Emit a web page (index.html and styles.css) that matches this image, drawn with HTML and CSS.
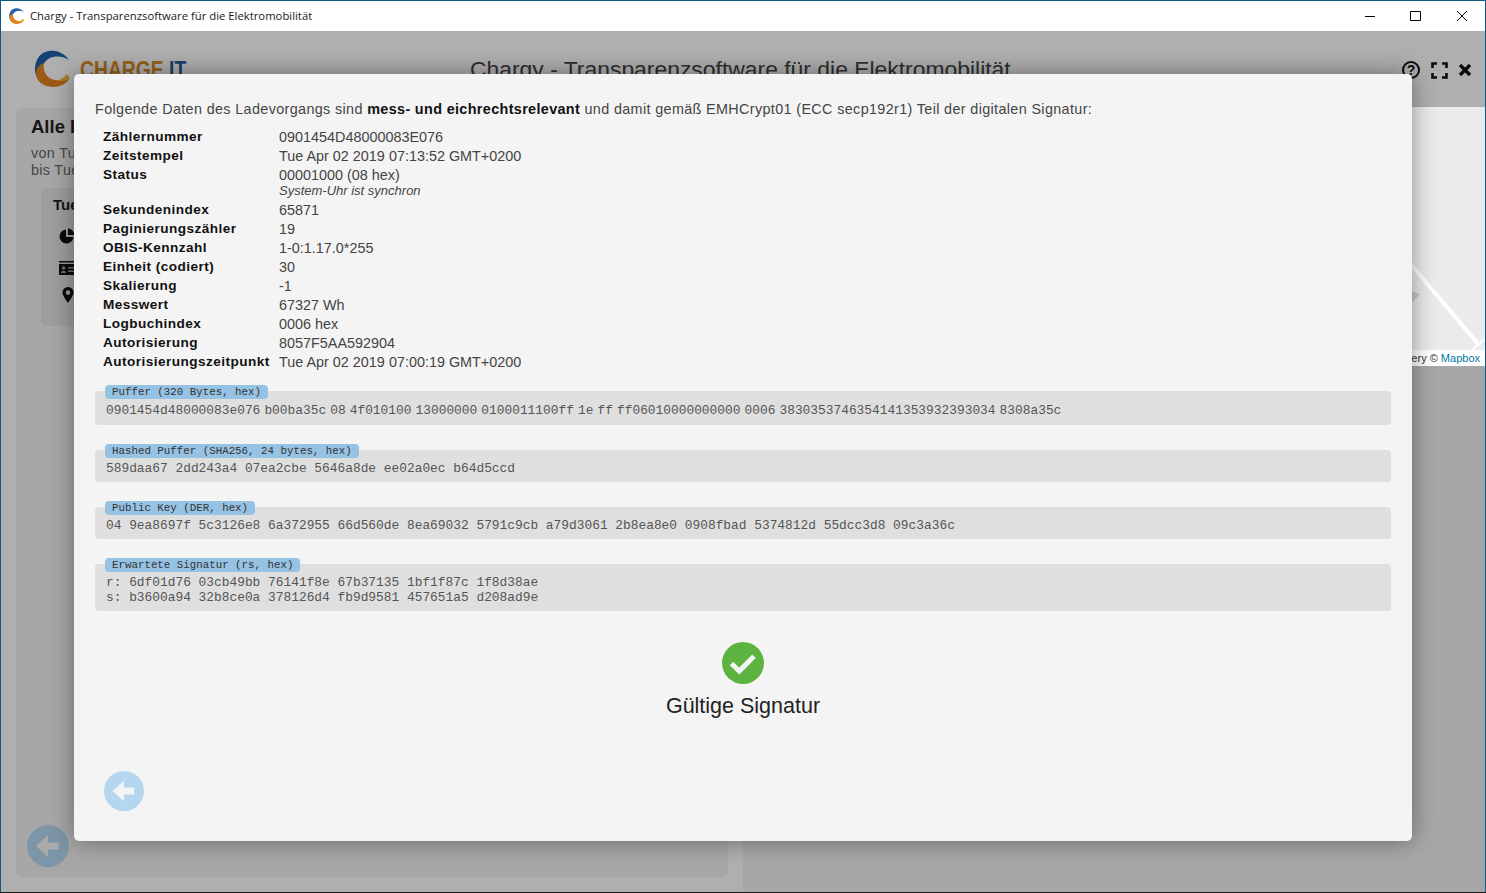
FILE: index.html
```html
<!DOCTYPE html>
<html lang="en">
<head>
    <meta charset="UTF-8">
    <meta name="viewport" content="width=device-width, initial-scale=1.0">
    <title>Chargy - Transparenzsoftware für die Elektromobilität</title>
    <link rel="stylesheet" href="styles.css">
</head>
<body>
    <svg class="defs" width="0" height="0">
        <symbol id="logoMark" viewBox="0 0 36 37">
            <path fill="#1f5fa8" d="M34 10C27-1 10-3 3 8C0 13-1 20 1 25C2 29 4 31 6 33C4 25 6 13 14 8.500C20 5.500 28 6 34 10Z"/>
            <path fill="#e0811f" d="M1 22C1 34 12 37 18 37C26 37 32 33 35 28C30 31 24 31 18 29.500C12 28 8 22 8.500 13C4 15 1.500 18 1 22Z"/>
            <path fill="#f2b233" d="M35 28C31 31 26 31.500 21 30.500C26 30 30 27 31.500 24Z"/>
        </symbol>
        <symbol id="arrowCircle" viewBox="-21 -21 42 42">
            <circle class="arrow-disc" r="21"/>
            <path class="arrow-head" d="M-12 0L0-10.700V-3.600H10.700V3.600H0V10.700Z"/>
        </symbol>
    </svg>

    <div class="window">
        <div class="titlebar">
            <svg class="titlebar-icon" width="16" height="16"><use href="#logoMark"/></svg>
            <span class="titlebar-text">Chargy - Transparenzsoftware für die Elektromobilität</span>
            <svg class="win-button" width="46" height="30" viewBox="0 0 46 30"><path d="M18 15.500H28" stroke="#000"/></svg>
            <svg class="win-button" width="46" height="30" viewBox="0 0 46 30"><path d="M17.500 10.500H27.500V19.500H17.500Z" stroke="#000" fill="none"/></svg>
            <svg class="win-button" width="46" height="30" viewBox="0 0 46 30"><path d="M18 10L28 20M28 10L18 20" stroke="#000" fill="none"/></svg>
        </div>

        <div class="app">
            <div class="app-header">
                <div class="brand">
                    <svg class="brand-mark" width="36" height="37"><use href="#logoMark"/></svg>
                    <span class="brand-name">CHARGE <span class="brand-it">IT</span></span>
                </div>
                <h1 class="app-title">Chargy - Transparenzsoftware für die Elektromobilität</h1>
                <div class="header-icons">
                    <svg width="20" height="20" viewBox="0 0 20 20"><circle cx="10" cy="10" r="8" fill="none" stroke="#111" stroke-width="2"/><text class="help-mark" x="10" y="14.500">?</text></svg>
                    <svg width="17" height="17" viewBox="0 0 17 17"><path d="M1.500 6V1.500H6M11 1.500H15.500V6M15.500 11V15.500H11M6 15.500H1.500V11" fill="none" stroke="#111" stroke-width="2.600"/></svg>
                    <svg width="14" height="14" viewBox="0 0 14 14"><path d="M2 2L12 12M12 2L2 12" fill="none" stroke="#111" stroke-width="3.400"/></svg>
                </div>
            </div>

            <div class="app-main">
                <div class="left-column">
                    <div class="panel">
                        <div class="panel-title">Alle Ladevorgänge</div>
                        <div class="panel-range">von Tue Apr 02 2019</div>
                        <div class="panel-range">bis Tue Apr 02 2019</div>
                        <div class="session-card">
                            <div class="session-title">Tue Apr 02 2019</div>
                            <svg class="session-icon icon-pie" width="16" height="16" viewBox="0 0 16 16"><path d="M7 1.500A7 7 0 1 0 14.500 9H7Z" fill="#111"/><path d="M9 0.500A7 7 0 0 1 15.500 7H9Z" fill="#111"/></svg>
                            <svg class="session-icon icon-card" width="16" height="14" viewBox="0 0 16 14"><path d="M0 0H16V1.500H0Z" fill="#111"/><path d="M0 3H16V14H0Z" fill="#111"/><circle cx="4.500" cy="7" r="1.800" fill="#9e9e9e"/><path d="M2 12C2 9 7 9 7 12Z" fill="#9e9e9e"/><path d="M9 6H15V7.500H9ZM9 9.500H15V11H9Z" fill="#9e9e9e"/></svg>
                            <svg class="session-icon icon-pin" width="12" height="16" viewBox="0 0 12 16"><path d="M6 0A5.500 5.500 0 0 0 .5 5.500C.5 9 6 16 6 16S11.500 9 11.500 5.500A5.500 5.500 0 0 0 6 0ZM6 3.300A2.300 2.300 0 1 1 6 7.900A2.300 2.300 0 0 1 6 3.300Z" fill="#111" fill-rule="evenodd"/></svg>
                        </div>
                        <div class="panel-spacer"></div>
                        <svg class="panel-back" width="42" height="42"><use href="#arrowCircle"/></svg>
                    </div>
                </div>
                <div class="right-column">
                    <div class="map">
                        <svg class="map-roads" width="742" height="259" viewBox="0 0 742 259">
                            <path d="M660 148L736 238" stroke="#fff" stroke-width="4" fill="none"/>
                            <path d="M712 258L742 232" stroke="#fff" stroke-width="2" fill="none"/>
                            <path d="M660 180L677 187L669 196L660 196Z" fill="#ccc"/>
                        </svg>
                        <div class="map-attribution">Imagery © <span class="map-link">Mapbox</span></div>
                    </div>
                </div>
            </div>

            <div class="overlay"></div>

            <div class="modal">
                <p class="modal-intro">Folgende Daten des Ladevorgangs sind <strong>mess- und eichrechtsrelevant</strong> und damit gemäß EMHCrypt01 (ECC secp192r1) Teil der digitalen Signatur:</p>

                <div class="fields">
                    <div class="field-name">Zählernummer</div><div class="field-value">0901454D48000083E076</div>
                    <div class="field-name">Zeitstempel</div><div class="field-value">Tue Apr 02 2019 07:13:52 GMT+0200</div>
                    <div class="field-name">Status</div><div class="field-value">00001000 (08 hex)<div class="field-note">System-Uhr ist synchron</div></div>
                    <div class="field-name">Sekundenindex</div><div class="field-value">65871</div>
                    <div class="field-name">Paginierungszähler</div><div class="field-value">19</div>
                    <div class="field-name">OBIS-Kennzahl</div><div class="field-value">1-0:1.17.0*255</div>
                    <div class="field-name">Einheit (codiert)</div><div class="field-value">30</div>
                    <div class="field-name">Skalierung</div><div class="field-value">-1</div>
                    <div class="field-name">Messwert</div><div class="field-value">67327 Wh</div>
                    <div class="field-name">Logbuchindex</div><div class="field-value">0006 hex</div>
                    <div class="field-name">Autorisierung</div><div class="field-value">8057F5AA592904</div>
                    <div class="field-name">Autorisierungszeitpunkt</div><div class="field-value">Tue Apr 02 2019 07:00:19 GMT+0200</div>
                </div>

                <div class="hex-box hex-box-packed">
                    <div class="hex-label">Puffer (320 Bytes, hex)</div>
                    <div class="hex-value">0901454d48000083e076 b00ba35c 08 4f010100 13000000 0100011100ff 1e ff ff06010000000000 0006 3830353746354141353932393034 8308a35c</div>
                </div>
                <div class="hex-box">
                    <div class="hex-label">Hashed Puffer (SHA256, 24 bytes, hex)</div>
                    <div class="hex-value">589daa67 2dd243a4 07ea2cbe 5646a8de ee02a0ec b64d5ccd</div>
                </div>
                <div class="hex-box">
                    <div class="hex-label">Public Key (DER, hex)</div>
                    <div class="hex-value">04 9ea8697f 5c3126e8 6a372955 66d560de 8ea69032 5791c9cb a79d3061 2b8ea8e0 0908fbad 5374812d 55dcc3d8 09c3a36c</div>
                </div>
                <div class="hex-box">
                    <div class="hex-label">Erwartete Signatur (rs, hex)</div>
                    <div class="hex-value">r: 6df01d76 03cb49bb 76141f8e 67b37135 1bf1f87c 1f8d38ae</div>
                    <div class="hex-value">s: b3600a94 32b8ce0a 378126d4 fb9d9581 457651a5 d208ad9e</div>
                </div>

                <div class="result">
                    <svg width="42" height="42" viewBox="-21 -21 42 42"><circle r="21" fill="#5cb33f"/><path d="M-11.500 .5L-3.700 8L11 -6.700" fill="none" stroke="#f4f4f4" stroke-width="5"/></svg>
                    <div class="result-text">Gültige Signatur</div>
                </div>

                <svg class="modal-back" width="40" height="40"><use href="#arrowCircle"/></svg>
            </div>
        </div>
    </div>
</body>
</html>
```

FILE: styles.css
```css
html, body {
    margin: 0;
    height: 100%;
    overflow: hidden;
}

body {
    font-family: "Liberation Sans", Arial, sans-serif;
    background-color: #1a1a1a;
}

.defs {
    position: absolute;
}

.window {
    box-sizing: border-box;
    width: 1486px;
    height: 892px;
    display: flex;
    flex-direction: column;
    border: 1px solid #0f5a80;
    border-bottom: none;
}

/* Title bar */
.titlebar {
    flex: none;
    height: 30px;
    display: flex;
    align-items: center;
    background-color: #fff;
}

.titlebar-icon {
    margin-left: 8px;
    margin-right: 5px;
}

.titlebar-text {
    flex: 1;
    padding-bottom: 2px;
    font-family: "Open Sans", sans-serif;
    font-size: 11.300px;
    color: #1a1a1a;
}

.win-button {
    display: block;
}

/* App behind the dialog */
.app {
    flex: 1;
    position: relative;
    display: flex;
    flex-direction: column;
    min-height: 0;
    background-color: #fbfbfb;
}

.overlay {
    position: absolute;
    top: 0;
    left: 0;
    right: 0;
    bottom: 0;
    background-color: rgba(0, 0, 0, 0.3);
}

.app-header {
    flex: none;
    height: 76px;
    display: flex;
    align-items: flex-start;
}

.brand {
    width: 440px;
    display: flex;
    align-items: flex-start;
    padding: 19px 0 0 34px;
    box-sizing: border-box;
}

.brand-mark {
    flex: none;
}

/* the real logo lettering is narrower than Liberation Sans Bold */
.brand-name {
    margin: 7px 0 0 9px;
    font-size: 23px;
    font-weight: bold;
    color: #d98a24;
    white-space: nowrap;
    transform: scaleX(0.84);
    transform-origin: left top;
}

.brand-it {
    color: #2a5c9a;
}

.app-title {
    flex: 1;
    margin: 25px 0 0;
    font-size: 22.900px;
    font-weight: normal;
    color: #444;
    white-space: nowrap;
    text-align: left;
    padding-left: 29px;
}

.header-icons {
    display: flex;
    align-items: center;
    gap: 10px;
    padding: 29px 13px 0 0;
}

.help-mark {
    font-size: 14px;
    font-weight: bold;
    text-anchor: middle;
    fill: #111;
}

.app-main {
    flex: 1;
    display: flex;
    min-height: 0;
}

.left-column {
    box-sizing: border-box;
    width: 742px;
    padding: 1px 15px 15px 15px;
    display: flex;
}

.panel {
    flex: 1;
    display: flex;
    flex-direction: column;
    align-items: flex-start;
    box-sizing: border-box;
    padding: 8px 15px 10px 15px;
    border-radius: 6px;
    background-color: #f0f0f0;
}

.panel-title {
    font-size: 18.500px;
    font-weight: bold;
    color: #222;
    margin-bottom: 7px;
}

.panel-range {
    font-size: 14.400px;
    letter-spacing: 0.3px;
    line-height: 17px;
    color: #666;
}

.session-card {
    align-self: stretch;
    box-sizing: border-box;
    height: 138px;
    margin: 9px 0 0 10px;
    padding: 8px 12px;
    border-radius: 6px;
    background-color: #e2e2e2;
    display: flex;
    flex-direction: column;
    align-items: flex-start;
}

.session-title {
    font-size: 15px;
    font-weight: bold;
    color: #222;
}

.session-icon {
    display: block;
}

.icon-pie {
    margin: 15px 0 0 6px;
}

.icon-card {
    margin: 17px 0 0 6px;
}

.icon-pin {
    margin: 12px 0 0 9px;
}

.panel-spacer {
    flex: 1;
}

.panel-back {
    margin: 0 0 0 -4px;
}

.arrow-disc {
    fill: #b4d7ef;
}

.arrow-head {
    fill: #f4f4f4;
}

.panel-back .arrow-head {
    fill: #f0f0f0;
}

.right-column {
    flex: 1;
    background-color: #f0f0f0;
}

.map {
    position: relative;
    z-index: 1;
    height: 259px;
    background-color: #ebebeb;
}

.map-roads {
    position: absolute;
    top: 0;
    left: 0;
}

.map-attribution {
    position: absolute;
    right: 0;
    bottom: 0;
    left: 0;
    height: 16px;
    padding-right: 5px;
    background-color: #fff;
    font-size: 11px;
    line-height: 16px;
    color: #333;
    text-align: right;
}

.map-link {
    color: #0078a8;
}

/* Dialog */
.modal {
    position: absolute;
    z-index: 2;
    top: 43px;
    left: 73px;
    box-sizing: border-box;
    width: 1338px;
    height: 767px;
    padding: 26px 21px 0;
    border-radius: 5px;
    background-color: #f4f4f4;
    box-shadow: 0 0 24px rgba(0, 0, 0, 0.4);
    display: flex;
    flex-direction: column;
    color: #444;
    font-size: 14.400px;
}

.modal-intro {
    margin: 0 0 10px;
    line-height: 18px;
    letter-spacing: 0.35px;
    white-space: nowrap;
}

.modal-intro strong {
    color: #111;
}

.fields {
    display: grid;
    grid-template-columns: 176px 1fr;
    margin: 0 0 19px 8px;
    line-height: 19px;
}

.field-name {
    font-size: 13.600px;
    font-weight: bold;
    line-height: 18px;
    color: #111;
    letter-spacing: 0.45px;
}

.field-note {
    margin: -2px 0 2px;
    font-size: 13px;
    font-style: italic;
    line-height: 16px;
}

.hex-box {
    margin-bottom: 25px;
    padding: 0 10px 6px 11px;
    border-radius: 4px;
    background-color: #dfdfdf;
}

.hex-box-packed {
    padding-bottom: 7px;
}

.hex-box-packed .hex-value {
    word-spacing: -3.650px;
    padding-top: 1px;
}

.hex-label {
    display: table;
    box-sizing: border-box;
    height: 14px;
    margin: -6px 0 3px -1px;
    padding: 0 7px;
    border-radius: 4px;
    background-color: #96c2e4;
    font-family: "Liberation Mono", "Courier New", monospace;
    font-size: 10.800px;
    line-height: 14px;
    color: #333;
}

.hex-value {
    font-family: "Liberation Mono", "Courier New", monospace;
    font-size: 12.860px;
    line-height: 15px;
    color: #555;
    white-space: nowrap;
}

.result {
    display: flex;
    flex-direction: column;
    align-items: center;
    margin-top: 6px;
}

.result-text {
    margin-top: 9px;
    font-size: 21.500px;
    line-height: 27px;
    color: #222;
}

.modal-back {
    margin: 51px 0 0 9px;
}
```
